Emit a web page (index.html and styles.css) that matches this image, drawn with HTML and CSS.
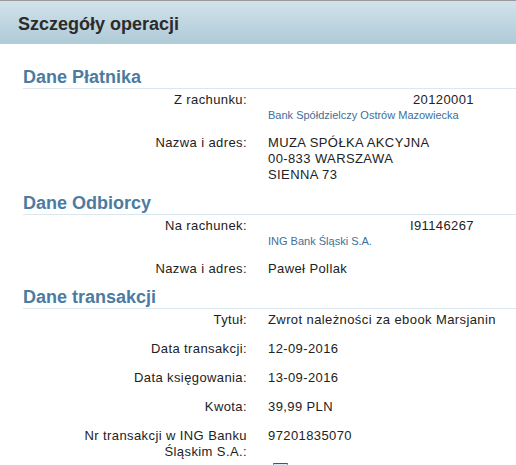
FILE: index.html
```html
<!DOCTYPE html>
<html lang="pl">
<head>
    <meta charset="UTF-8">
    <meta name="viewport" content="width=device-width, initial-scale=1.0">
    <title>Szczegóły operacji</title>
    <link rel="stylesheet" href="styles.css">
</head>

<body>
    <div class="page-header">
        <h1>Szczegóły operacji</h1>
    </div>

    <div class="details">
        <h2 class="section-title">Dane Płatnika</h2>
        <div class="row">
            <div class="label">Z rachunku:</div>
            <div class="value">
                <div class="account">20120001</div>
                <div class="bank-name">Bank Spółdzielczy Ostrów Mazowiecka</div>
            </div>
        </div>
        <div class="row">
            <div class="label">Nazwa i adres:</div>
            <div class="value">MUZA SPÓŁKA AKCYJNA<br>00-833 WARSZAWA<br>SIENNA 73</div>
        </div>

        <h2 class="section-title">Dane Odbiorcy</h2>
        <div class="row">
            <div class="label">Na rachunek:</div>
            <div class="value">
                <div class="account">I91146267</div>
                <div class="bank-name">ING Bank Śląski S.A.</div>
            </div>
        </div>
        <div class="row">
            <div class="label">Nazwa i adres:</div>
            <div class="value">Paweł Pollak</div>
        </div>

        <h2 class="section-title">Dane transakcji</h2>
        <div class="row">
            <div class="label">Tytuł:</div>
            <div class="value">Zwrot należności za ebook Marsjanin</div>
        </div>
        <div class="row">
            <div class="label">Data transakcji:</div>
            <div class="value">12-09-2016</div>
        </div>
        <div class="row">
            <div class="label">Data księgowania:</div>
            <div class="value">13-09-2016</div>
        </div>
        <div class="row">
            <div class="label">Kwota:</div>
            <div class="value">39,99 PLN</div>
        </div>
        <div class="row">
            <div class="label">Nr transakcji w ING Banku Śląskim S.A.:</div>
            <div class="value">
                97201835070
                <div class="print-box"></div>
            </div>
        </div>
    </div>
</body>
</html>
```

FILE: styles.css
```css
body {
    margin: 0;
    font-family: 'Liberation Sans', Arial, sans-serif;
    color: #222;
    background-color: #fff;
    overflow: hidden;
}

.page-header {
    height: 42px;
    border-top: 1px solid #999;
    border-bottom: 1px solid #c4c8ca;
    background: linear-gradient(to bottom, #d2e2ea, #afcbd8);
    padding-left: 18px;
}

.page-header h1 {
    margin: 0;
    font-size: 18px;
    font-weight: bold;
    line-height: 42px;
    color: #2b2b2b;
    padding-top: 2px;
}

.details {
    padding-top: 23px;
}

.section-title {
    margin: 0 0 0 23px;
    font-size: 18px;
    font-weight: bold;
    line-height: 21px;
    color: #4c7ba2;
    border-bottom: 1px solid #dbe7ee;
}

.row {
    display: flex;
    padding: 3px 0 10px 0;
    font-size: 13px;
    line-height: 16px;
    letter-spacing: 0.4px;
}

.label {
    width: 180px;
    margin-left: 67px;
    text-align: right;
}

.value {
    margin-left: 21px;
    flex: 1;
}

.account {
    width: 206px;
    text-align: right;
}

.bank-name {
    font-size: 11px;
    line-height: 14px;
    letter-spacing: 0;
    color: #3e6f99;
}

.print-box {
    width: 13px;
    height: 12px;
    margin: 19px 0 0 5px;
    border: 1px solid #8a9aa6;
    border-top-color: #4a5560;
    background-color: #dbe9f4;
}
```
